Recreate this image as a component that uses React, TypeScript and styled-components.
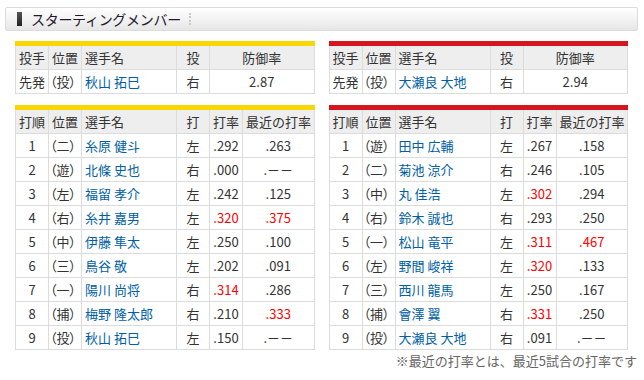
import React from 'react';
import styled, { createGlobalStyle } from 'styled-components';

const GlobalStyle = createGlobalStyle`
	body {
		margin: 0;
		background: #fff;
		font-family: "Noto Sans CJK JP", "DejaVu Sans", sans-serif;
		color: #333;
	}
`;

const Page = styled.div`
	width: 644px;
	height: 380px;
	padding: 7px 6px 0 5px;
	box-sizing: border-box;
`;

const TitleBar = styled.div`
	display: flex;
	align-items: center;
	height: 24px;
	box-sizing: border-box;
	border: 1px solid #dcdcdc;
	border-radius: 2px;
	background: linear-gradient(#ffffff 0%, #f4f4f4 45%, #e6e6e6 100%);
	padding-left: 11px;
`;

const TitleMark = styled.span`
	width: 5px;
	height: 14px;
	background: linear-gradient(#555, #222);
	margin-right: 9px;
`;

const TitleText = styled.h2`
	margin: 0;
	font-size: 14px;
	font-weight: normal;
	color: #24182f;
	letter-spacing: -0.3px;
	line-height: 1;
`;

const TitleSep = styled.span`
	width: 0;
	height: 12px;
	margin-left: 8px;
	border-left: 2px dotted #c8c8c8;
`;

const Columns = styled.div`
	display: flex;
	gap: 14px;
	padding: 0 10px;
	margin-top: 10px;
`;

const Side = styled.div`
	display: flex;
	flex-direction: column;
	gap: 11px;
	width: 300px;
`;

const Table = styled.table<{ $accent: string }>`
	border-collapse: collapse;
	width: 100%;
	table-layout: fixed;
	border-top: 5px solid ${(p) => p.$accent};
	font-size: 13px;

	th,
	td {
		border: 1px solid #dcdcdc;
		height: 23px;
		padding: 0 3px;
		white-space: nowrap;
		overflow: hidden;
		font-weight: normal;
		line-height: 1;
	}

	th {
		background: #eeeeee;
		text-align: left;
	}
`;

const Cell = styled.td<{ $center?: boolean; $red?: boolean; $blue?: boolean; $tight?: boolean }>`
	text-align: ${(p) => (p.$center ? 'center' : 'left')};
	color: ${(p) => (p.$red ? '#ff0000' : p.$blue ? '#005ea6' : '#333')};
	font-feature-settings: ${(p) => (p.$tight ? '"palt"' : 'normal')};
	&& {
		padding-left: ${(p) => (p.$tight ? '1px' : '3px')};
	}
`;

const Head = styled.th<{ $center?: boolean }>`
	&& {
		text-align: ${(p) => (p.$center ? 'center' : 'left')};
	}
`;

const Note = styled.p`
	margin: 4px 0 0;
	text-align: right;
	font-size: 13px;
	color: #666;
	line-height: 1;
	padding-right: 1px;
`;

type Pitcher = { name: string; hand: string; era: string };
type Batter = { order: number; pos: string; name: string; hand: string; avg: string; avgRed?: boolean; recent: string; recentRed?: boolean };

const NONE = '.－－';

const teams: { accent: string; pitcher: Pitcher; batters: Batter[] }[] = [
	{
		accent: '#f8d800',
		pitcher: { name: '秋山 拓巳', hand: '右', era: '2.87' },
		batters: [
			{ order: 1, pos: '（二）', name: '糸原 健斗', hand: '左', avg: '.292', recent: '.263' },
			{ order: 2, pos: '（遊）', name: '北條 史也', hand: '右', avg: '.000', recent: NONE },
			{ order: 3, pos: '（左）', name: '福留 孝介', hand: '左', avg: '.242', recent: '.125' },
			{ order: 4, pos: '（右）', name: '糸井 嘉男', hand: '左', avg: '.320', avgRed: true, recent: '.375', recentRed: true },
			{ order: 5, pos: '（中）', name: '伊藤 隼太', hand: '左', avg: '.250', recent: '.100' },
			{ order: 6, pos: '（三）', name: '鳥谷 敬', hand: '左', avg: '.202', recent: '.091' },
			{ order: 7, pos: '（一）', name: '陽川 尚将', hand: '右', avg: '.314', avgRed: true, recent: '.286' },
			{ order: 8, pos: '（捕）', name: '梅野 隆太郎', hand: '右', avg: '.210', recent: '.333', recentRed: true },
			{ order: 9, pos: '（投）', name: '秋山 拓巳', hand: '左', avg: '.150', recent: NONE },
		],
	},
	{
		accent: '#d7151f',
		pitcher: { name: '大瀬良 大地', hand: '右', era: '2.94' },
		batters: [
			{ order: 1, pos: '（遊）', name: '田中 広輔', hand: '左', avg: '.267', recent: '.158' },
			{ order: 2, pos: '（二）', name: '菊池 涼介', hand: '右', avg: '.246', recent: '.105' },
			{ order: 3, pos: '（中）', name: '丸 佳浩', hand: '左', avg: '.302', avgRed: true, recent: '.294' },
			{ order: 4, pos: '（右）', name: '鈴木 誠也', hand: '右', avg: '.293', recent: '.250' },
			{ order: 5, pos: '（一）', name: '松山 竜平', hand: '左', avg: '.311', avgRed: true, recent: '.467', recentRed: true },
			{ order: 6, pos: '（左）', name: '野間 峻祥', hand: '左', avg: '.320', avgRed: true, recent: '.133' },
			{ order: 7, pos: '（三）', name: '西川 龍馬', hand: '左', avg: '.250', recent: '.167' },
			{ order: 8, pos: '（捕）', name: '會澤 翼', hand: '右', avg: '.331', avgRed: true, recent: '.250' },
			{ order: 9, pos: '（投）', name: '大瀬良 大地', hand: '右', avg: '.091', recent: NONE },
		],
	},
];

function PitcherTable({ accent, pitcher }: { accent: string; pitcher: Pitcher }) {
	return (
		<Table $accent={accent}>
			<colgroup>
				<col style={{ width: 33 }} />
				<col style={{ width: 33 }} />
				<col style={{ width: 95 }} />
				<col style={{ width: 33 }} />
				<col />
			</colgroup>
			<thead>
				<tr>
					<Head>投手</Head>
					<Head>位置</Head>
					<Head>選手名</Head>
					<Head $center>投</Head>
					<Head $center>防御率</Head>
				</tr>
			</thead>
			<tbody>
				<tr>
					<Cell>先発</Cell>
					<Cell $tight>（投）</Cell>
					<Cell $blue>{pitcher.name}</Cell>
					<Cell $center>{pitcher.hand}</Cell>
					<Cell $center>{pitcher.era}</Cell>
				</tr>
			</tbody>
		</Table>
	);
}

function BatterTable({ accent, batters }: { accent: string; batters: Batter[] }) {
	return (
		<Table $accent={accent}>
			<colgroup>
				<col style={{ width: 33 }} />
				<col style={{ width: 33 }} />
				<col style={{ width: 95 }} />
				<col style={{ width: 33 }} />
				<col style={{ width: 33 }} />
				<col />
			</colgroup>
			<thead>
				<tr>
					<Head>打順</Head>
					<Head>位置</Head>
					<Head>選手名</Head>
					<Head $center>打</Head>
					<Head $center>打率</Head>
					<Head $center>最近の打率</Head>
				</tr>
			</thead>
			<tbody>
				{batters.map((b) => (
					<tr key={b.order}>
						<Cell $center>{b.order}</Cell>
						<Cell $tight>{b.pos}</Cell>
						<Cell $blue>{b.name}</Cell>
						<Cell $center>{b.hand}</Cell>
						<Cell $center $red={b.avgRed}>{b.avg}</Cell>
						<Cell $center $red={b.recentRed}>{b.recent}</Cell>
					</tr>
				))}
			</tbody>
		</Table>
	);
}

export default function App(): JSX.Element {
	return (
		<Page>
			<GlobalStyle />
			<TitleBar>
				<TitleMark />
				<TitleText>スターティングメンバー</TitleText>
				<TitleSep />
			</TitleBar>
			<Columns>
				{teams.map((t) => (
					<Side key={t.accent}>
						<PitcherTable accent={t.accent} pitcher={t.pitcher} />
						<BatterTable accent={t.accent} batters={t.batters} />
					</Side>
				))}
			</Columns>
			<Note>※最近の打率とは、最近5試合の打率です</Note>
		</Page>
	);
}
